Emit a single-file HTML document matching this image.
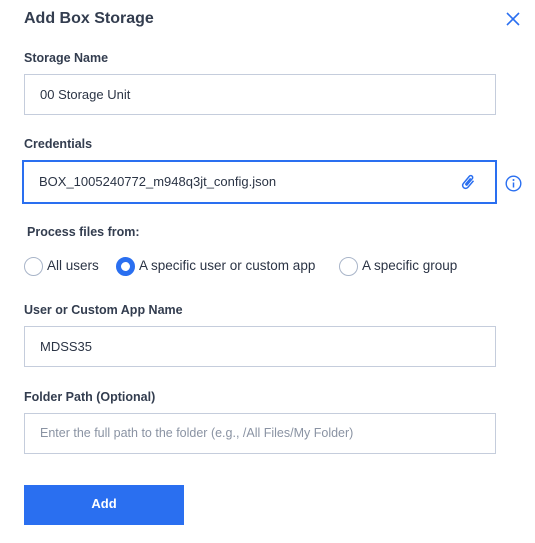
<!DOCTYPE html>
<html><head><style>
body{margin:0;width:535px;height:543px;background:#fff;font-family:"Liberation Sans",sans-serif;color:#2b3445;position:relative;overflow:hidden}
.a{position:absolute}
.t{left:24px;top:10px;font-size:16px;font-weight:bold;color:#333d4f}
.l{left:24px;font-size:12.5px;font-weight:bold;color:#333d4f}
.in{left:24px;width:472px;height:41px;border:1px solid #c5cddc;box-sizing:border-box;font-size:13px;line-height:39px;padding-left:15px;color:#2b3445}
.r{top:257px;width:16px;height:16px;border:1.5px solid #a9b5c9;border-radius:50%;box-sizing:border-box}
.rt{top:258px;font-size:13.5px;color:#2b3445}
</style></head><body>
<div class="a t">Add Box Storage</div>
<svg class="a" style="left:506px;top:12px" width="14" height="14" viewBox="0 0 14 14"><path d="M1 1L13 13M13 1L1 13" stroke="#2a6ff0" stroke-width="1.6"/></svg>
<div class="a l" style="top:51px">Storage Name</div>
<div class="a in" style="top:74px">00 Storage Unit</div>
<div class="a l" style="top:137px">Credentials</div>
<div class="a in" style="top:160px;left:22px;width:475px;height:44px;border:2px solid #2a6ff0;line-height:40px">BOX_1005240772_m948q3jt_config.json</div>
<svg class="a" style="left:459px;top:173px" width="18" height="18" viewBox="0 0 24 24"><path d="M16.5 6v11.5a4 4 0 0 1-8 0V5a2.5 2.5 0 0 1 5 0v10.5a1 1 0 0 1-2 0V6" fill="none" stroke="#2a6ff0" stroke-width="2" transform="rotate(40 12 12)"/></svg>
<svg class="a" style="left:505px;top:175px" width="17" height="17" viewBox="0 0 17 17"><circle cx="8.5" cy="8.5" r="7.3" fill="none" stroke="#2a6ff0" stroke-width="1.4"/><circle cx="8.5" cy="5" r="1" fill="#2a6ff0"/><path d="M8.5 7.5v5" stroke="#2a6ff0" stroke-width="1.5"/></svg>
<div class="a l" style="top:225px;left:27px">Process files from:</div>
<div class="a r" style="left:24px;top:257px;width:19px;height:19px"></div>
<div class="a rt" style="left:47px">All users</div>
<div class="a r" style="left:116px;width:19px;height:19px;border:5px solid #2a6ff0"></div>
<div class="a rt" style="left:139px">A specific user or custom app</div>
<div class="a r" style="left:339px;width:19px;height:19px"></div>
<div class="a rt" style="left:362px">A specific group</div>
<div class="a l" style="top:303px">User or Custom App Name</div>
<div class="a in" style="top:326px">MDSS35</div>
<div class="a l" style="top:390px">Folder Path (Optional)</div>
<div class="a in" style="top:413px;color:#8a93a3;font-size:12.5px">Enter the full path to the folder (e.g., /All Files/My Folder)</div>
<div class="a" style="left:24px;top:485px;width:160px;height:40px;background:#2a6ff0;color:#fff;font-weight:bold;font-size:13px;text-align:center;line-height:38px">Add</div>
</body></html>
